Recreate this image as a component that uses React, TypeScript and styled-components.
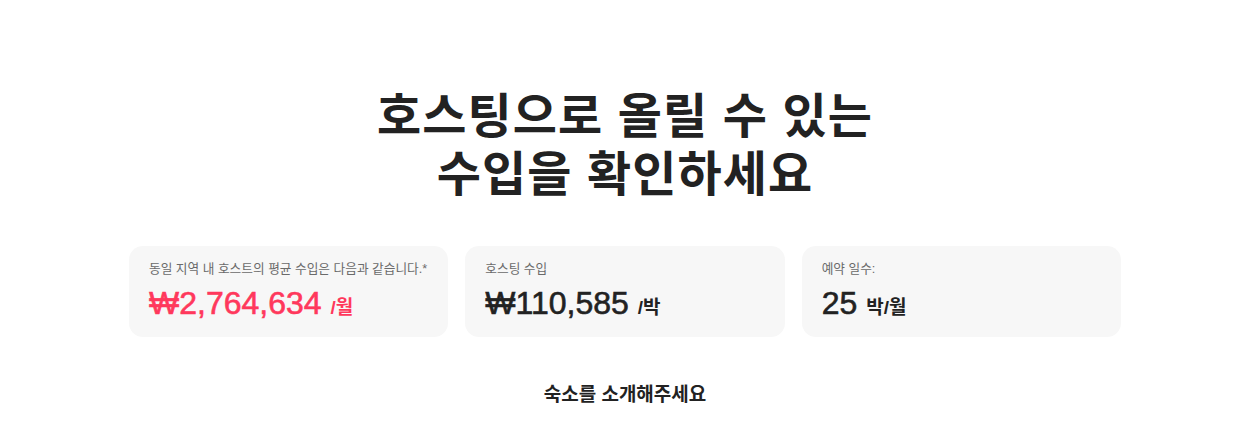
import React from "react";
import styled, { createGlobalStyle } from "styled-components";

const Global = createGlobalStyle`
  html, body { margin: 0; padding: 0; background: #fff; }
  body { font-family: "Liberation Sans", "Noto Sans CJK KR", sans-serif; color: #222; }
`;

const Page = styled.main`
  display: flex;
  flex-direction: column;
  align-items: center;
  padding: 88px 0 0 13px;
`;

const Title = styled.h1`
  margin: 0;
  font-size: 48px;
  line-height: 58px;
  font-weight: 700;
  text-align: center;
  color: #222;
  letter-spacing: 1.1px;
`;

const Cards = styled.section`
  margin-top: 42px;
  width: 992px;
  display: grid;
  grid-template-columns: repeat(3, 1fr);
  gap: 17px;
`;

const Card = styled.div`
  background: #f7f7f7;
  border-radius: 14px;
  height: 91px;
  box-sizing: border-box;
  padding: 15px 20px 0;
  display: flex;
  flex-direction: column;
`;

const Label = styled.div`
  font-size: 12.7px;
  line-height: 16px;
  color: #6a6a6a;
`;

const Value = styled.div<{ $accent?: boolean }>`
  margin-top: 7px;
  display: flex;
  align-items: baseline;
  gap: 9px;
  color: ${(p) => (p.$accent ? "#ff385c" : "#222")};
`;

const Amount = styled.span`
  font-size: 32px;
  line-height: 38px;
  font-weight: 400;
  -webkit-text-stroke: 0.6px currentColor;
`;

const Unit = styled.span`
  font-size: 19px;
  font-weight: 700;
`;

const Footer = styled.h2`
  margin: 42px 0 0;
  font-size: 19px;
  font-weight: 700;
  color: #222;
`;

export default function App() {
  return (
    <>
      <Global />
      <Page>
        <Title>
          호스팅으로 올릴 수 있는
          <br />
          수입을 확인하세요
        </Title>
        <Cards>
          <Card>
            <Label>동일 지역 내 호스트의 평균 수입은 다음과 같습니다.*</Label>
            <Value $accent>
              <Amount>₩2,764,634</Amount>
              <Unit>/월</Unit>
            </Value>
          </Card>
          <Card>
            <Label>호스팅 수입</Label>
            <Value>
              <Amount>₩110,585</Amount>
              <Unit>/박</Unit>
            </Value>
          </Card>
          <Card>
            <Label>예약 일수:</Label>
            <Value>
              <Amount>25</Amount>
              <Unit>박/월</Unit>
            </Value>
          </Card>
        </Cards>
        <Footer>숙소를 소개해주세요</Footer>
      </Page>
    </>
  );
}
